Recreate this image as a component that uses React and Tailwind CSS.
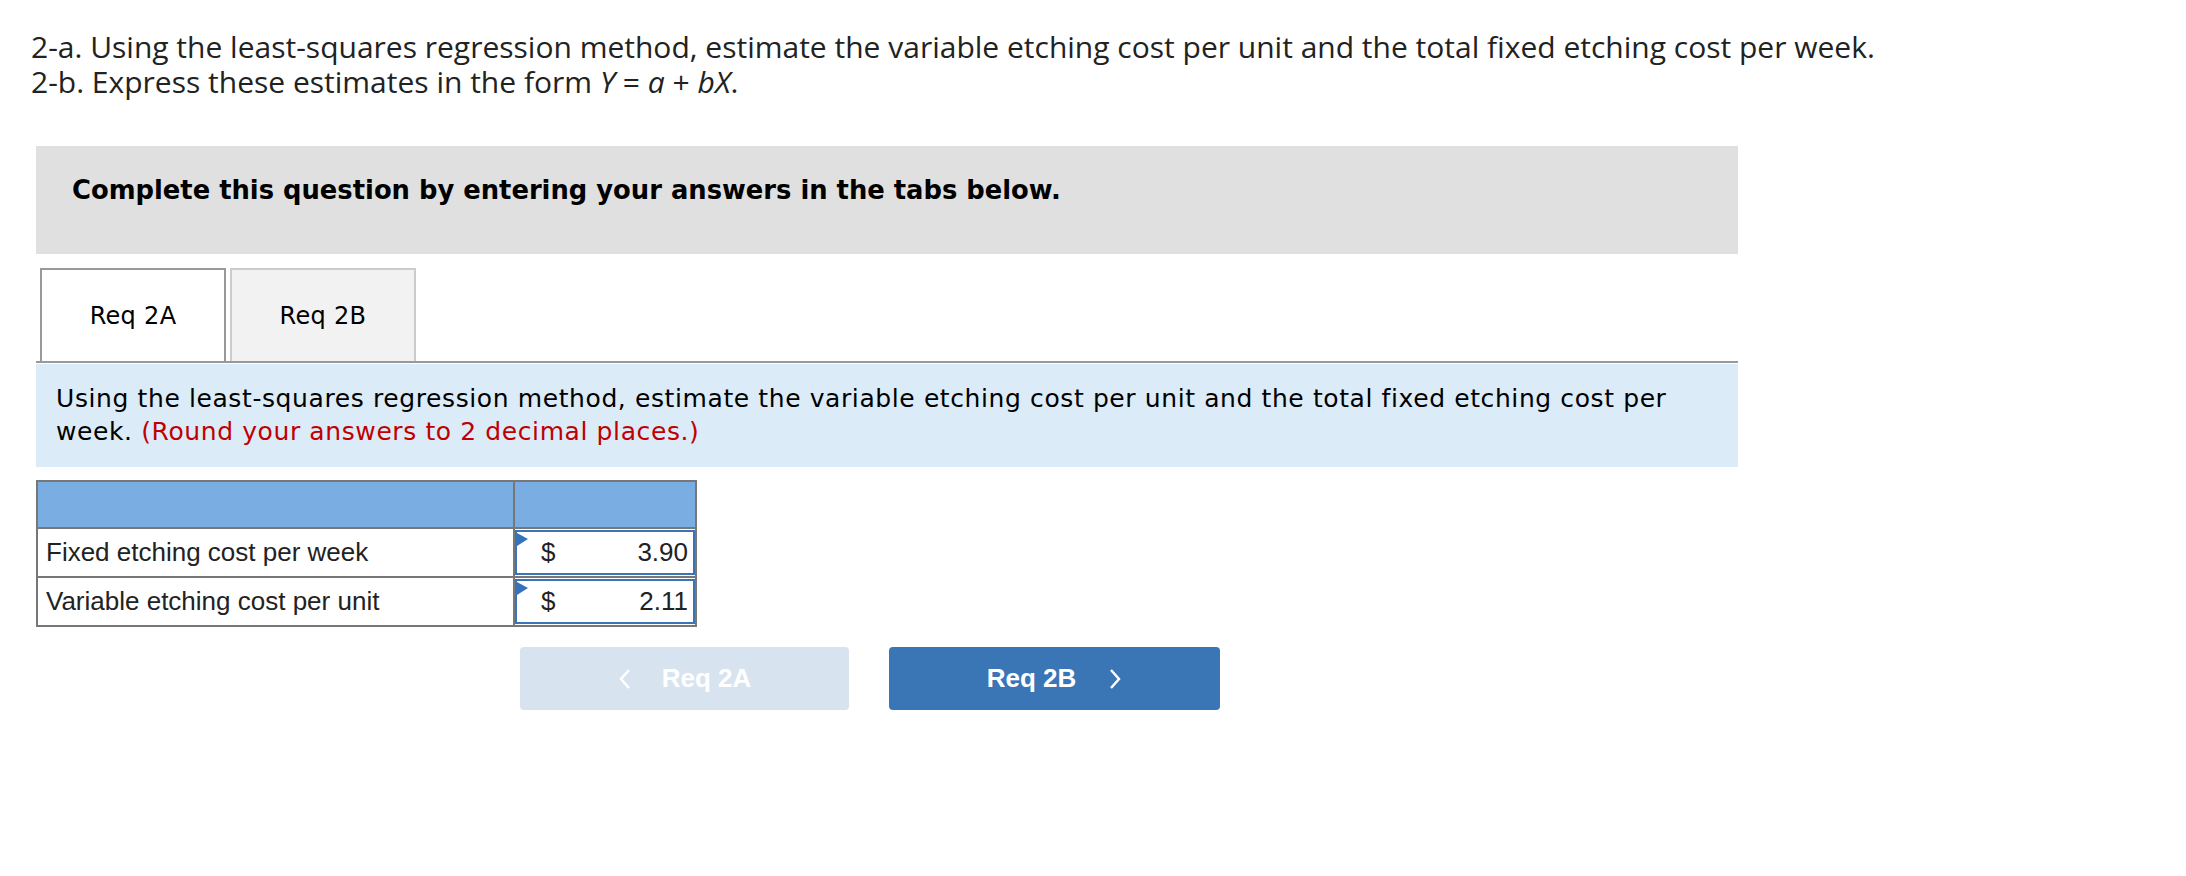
import React from 'react';

const rows = [
  { label: 'Fixed etching cost per week', value: '3.90' },
  { label: 'Variable etching cost per unit', value: '2.11' },
];

function Marker() {
  return (
    <svg className="absolute left-0 top-0" width="12" height="15" viewBox="0 0 12 15">
      <polygon points="0,1 11,7 0,14" fill="#3472bd" />
    </svg>
  );
}

export default function App() {
  return (
    <div className="min-h-[876px] w-[2186px] bg-white text-black">
      {/* Question heading */}
      <div className="pl-[31px] pt-[29px] font-['Open_Sans',sans-serif] text-[30px] leading-[35px] text-[#222]">
        <p>2-a. Using the least-squares regression method, estimate the variable etching cost per unit and the total fixed etching cost per week.</p>
        <p>
          2-b. Express these estimates in the form <i>Y</i> = <i>a</i> + <i>bX</i>.
        </p>
      </div>

      <div className="ml-[36px] mt-[47px] w-[1702px]">
        {/* Instruction bar */}
        <div className="h-[108px] bg-[#e0e0e0] pl-[36px] pt-[28px] font-['DejaVu_Sans',sans-serif] text-[25.8px] font-bold leading-[32px]">
          Complete this question by entering your answers in the tabs below.
        </div>

        {/* Tabs */}
        <div className="mt-[14px] flex gap-[4px] border-b-2 border-[#999] pl-[4px] font-['DejaVu_Sans',sans-serif] text-[24px] tracking-[0.3px]">
          <div className="flex h-[93px] w-[186px] items-center justify-center border-2 border-b-0 border-[#999] bg-white">
            Req 2A
          </div>
          <div className="flex h-[93px] w-[186px] items-center justify-center border-2 border-b-0 border-[#ccc] bg-[#f2f2f2]">
            Req 2B
          </div>
        </div>

        {/* Prompt */}
        <div className="mt-[1px] h-[103px] bg-[#dcebf8] pl-[20px] pr-[30px] pt-[18px] font-['DejaVu_Sans',sans-serif] text-[25px] leading-[33px] tracking-[0.6px]">
          Using the least-squares regression method, estimate the variable etching cost per unit and the total fixed etching cost per week.{' '}
          <span className="text-[#c00000]">(Round your answers to 2 decimal places.)</span>
        </div>

        {/* Answer table */}
        <table className="mt-[13px] w-[661px] border-collapse font-['Liberation_Sans',Arial,sans-serif] text-[26px]">
          <tbody>
            <tr className="h-[47px] bg-[#7aaee3]">
              <td className="w-[477px] border-2 border-[#777]"></td>
              <td className="border-2 border-[#777]"></td>
            </tr>
            {rows.map((r) => (
              <tr key={r.label} className="h-[49px]">
                <td className="border-2 border-[#777] pl-[8px] text-[#222]">{r.label}</td>
                <td className="border-2 border-[#777] p-0">
                  <div className="relative flex h-[45px] items-center justify-between border-2 border-[#3b74b6] pl-[24px] pr-[5px] text-[#222]">
                    <Marker />
                    <span>$</span>
                    <span>{r.value}</span>
                  </div>
                </td>
              </tr>
            ))}
          </tbody>
        </table>

        {/* Navigation */}
        <div className="ml-[484px] mt-[20px] flex gap-[40px] font-['Liberation_Sans',Arial,sans-serif] text-[26px] font-bold text-white">
          <button className="flex h-[63px] w-[329px] items-center justify-center gap-[30px] rounded-[4px] bg-[#d8e3f0]">
            <svg width="14" height="24" viewBox="0 0 14 24" fill="none" stroke="white" strokeWidth="2.5">
              <path d="M11 3L3 12l8 9" />
            </svg>
            <span>Req 2A</span>
          </button>
          <button className="flex h-[63px] w-[331px] items-center justify-center gap-[32px] rounded-[4px] bg-[#3a75b6]">
            <span>Req 2B</span>
            <svg width="14" height="24" viewBox="0 0 14 24" fill="none" stroke="white" strokeWidth="2.5">
              <path d="M3 3l8 9-8 9" />
            </svg>
          </button>
        </div>
      </div>
    </div>
  );
}
